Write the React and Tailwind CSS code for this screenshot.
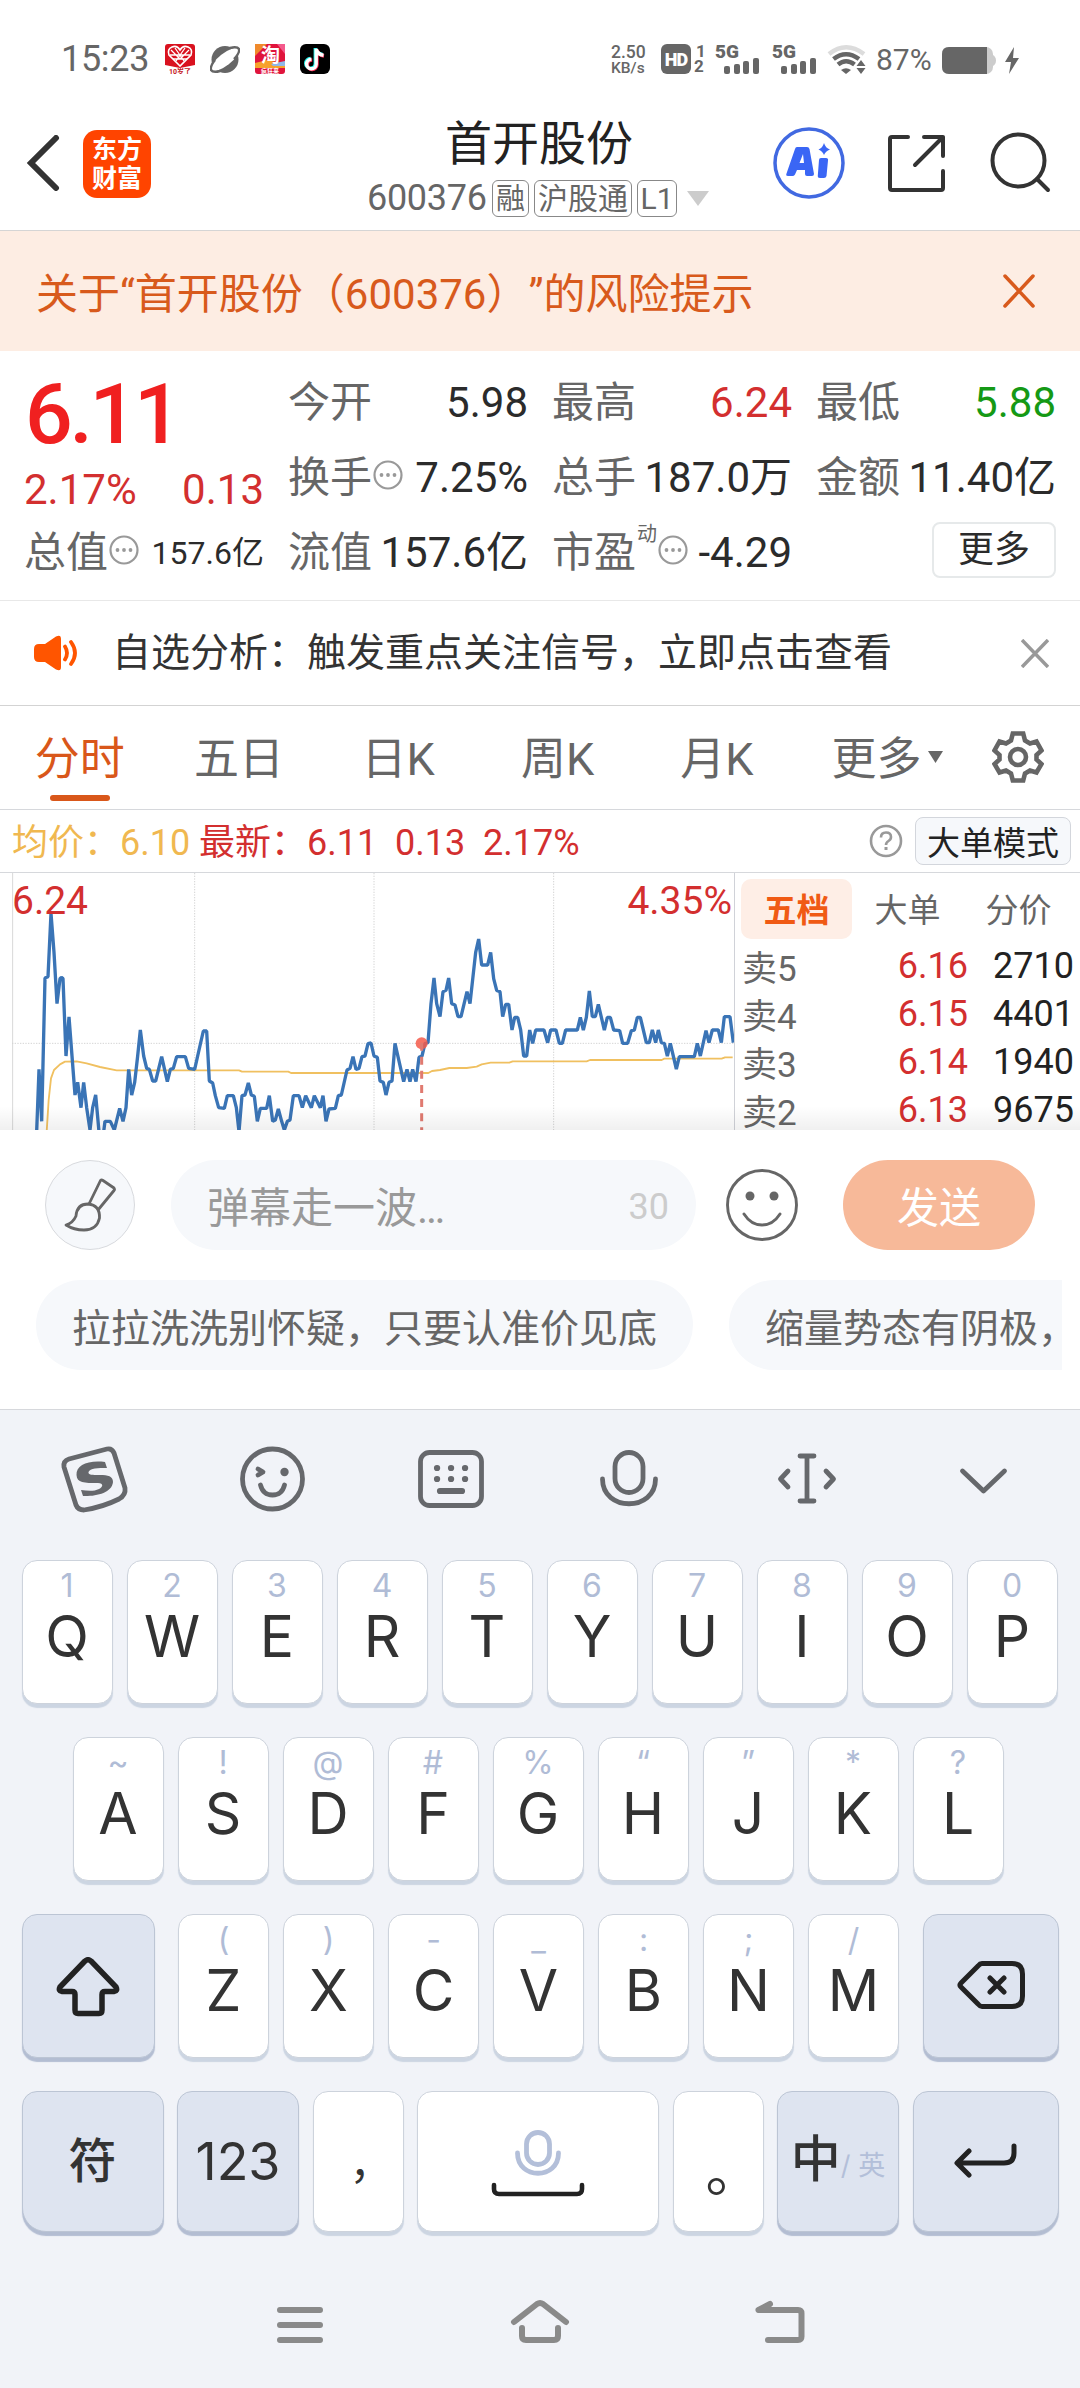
import { useState } from "react";

const priceLine =
  "110,1295 117,1108 125,1264 135,834 144,830 153,640 162,757 171,911 180,836 184,832 189,836 198,1068 207,951 216,1068 225,1185 233,1147 243,1223 251,1147 260,1223 270,1290 278,1223 287,1185 297,1295 311,1295 315,1264 331,1264 343,1290 359,1225 369,1264 378,1223 386,1108 395,1185 404,1147 413,1068 421,990 431,1068 440,1105 448,1108 458,1143 467,1143 485,1070 502,1145 511,1108 520,1105 530,1070 556,1070 566,1105 584,1108 593,1068 610,993 620,993 628,1143 638,1149 646,1187 656,1223 673,1225 682,1187 700,1187 709,1223 717,1295 726,1187 735,1185 745,1149 754,1185 763,1189 772,1264 781,1225 800,1225 808,1187 818,1264 826,1260 835,1227 845,1264 853,1290 862,1264 870,1260 880,1187 897,1187 907,1223 917,1187 934,1223 943,1187 961,1223 969,1187 978,1264 987,1227 1006,1225 1015,1187 1024,1185 1041,1110 1050,1105 1059,1070 1068,1108 1077,1105 1086,1070 1095,1068 1104,1031 1113,1029 1122,1068 1132,1072 1140,1143 1150,1147 1158,1185 1167,1147 1176,1143 1185,1030 1211,1145 1221,1108 1230,1145 1238,1108 1248,1145 1257,1072 1266,1068 1275,1030 1284,1028 1293,911 1302,834 1310,911 1320,950 1329,875 1338,871 1346,834 1355,911 1365,915 1374,950 1383,950 1401,875 1410,911 1427,757 1436,717 1445,795 1463,795 1472,757 1481,836 1490,871 1500,875 1508,950 1517,913 1526,913 1536,990 1544,952 1553,952 1562,990 1571,1068 1580,1068 1589,990 1598,1030 1607,990 1632,990 1643,1028 1652,990 1668,990 1678,1030 1687,1030 1697,990 1732,990 1741,952 1750,990 1759,952 1768,873 1777,950 1786,950 1795,913 1813,990 1822,952 1831,952 1841,990 1859,992 1868,1030 1883,1030 1894,992 1903,990 1912,952 1921,952 1930,990 1939,1028 1948,1028 1957,990 1967,1028 1975,990 1984,1028 1993,1030 2002,1068 2011,1030 2029,1107 2038,1070 2083,1070 2092,1030 2101,1068 2118,992 2127,1028 2137,990 2155,990 2164,1028 2173,950 2190,950 2200,1028";

const avgLine =
  "140,1295 146,1200 153,1135 162,1110 180,1093 195,1085 230,1084 260,1090 300,1101 350,1111 717,1111 726,1115 865,1115 873,1119 1285,1119 1296,1113 1320,1110 1348,1104 1400,1104 1430,1100 1445,1093 1472,1088 1528,1088 1538,1084 1760,1084 1770,1080 1985,1080 1993,1076 2165,1076 2175,1072 2198,1072";

const tabs = ["分时", "五日", "日K", "周K", "月K"];

const asks = [
  { name: "卖5", price: "6.16", volume: "2710" },
  { name: "卖4", price: "6.15", volume: "4401" },
  { name: "卖3", price: "6.14", volume: "1940" },
  { name: "卖2", price: "6.13", volume: "9675" },
];

const row1 = [["Q", "1"], ["W", "2"], ["E", "3"], ["R", "4"], ["T", "5"], ["Y", "6"], ["U", "7"], ["I", "8"], ["O", "9"], ["P", "0"]];
const row2 = [["A", "~"], ["S", "!"], ["D", "@"], ["F", "#"], ["G", "%"], ["H", "“"], ["J", "”"], ["K", "*"], ["L", "?"]];
const row3 = [["Z", "("], ["X", ")"], ["C", "-"], ["V", "_"], ["B", ":"], ["N", ";"], ["M", "/"]];

const Signal = () => (
  <div className="w-[45px] h-[30px] flex flex-col justify-between">
    <span className="text-[19px] leading-[15px] h-[14px] font-black">5G</span>
    <svg className="ml-[9px] -mt-[2px]" width="36" height="16" fill="#666">
      <rect x="0" y="8" width="6" height="8" rx="2" />
      <rect x="10" y="6" width="6" height="10" rx="2" />
      <rect x="19" y="3" width="6" height="13" rx="2" />
      <rect x="29" y="0" width="6" height="16" rx="2" />
    </svg>
  </div>
);

const StatusBar = () => (
  <div className="h-[118px] pt-[44px] pl-[61px] flex items-start text-[#666]">
    <span className="w-[104px] text-[36px] leading-[30px] tracking-[-0.3px]">15:23</span>
    <div className="flex gap-[15px]">
      <svg width="30" height="30" viewBox="0 0 30 30">
        <rect width="30" height="30" rx="3" fill="#fff" />
        <path d="M3 0H27Q30 0 30 3V21L15 24L0 21V3Q0 0 3 0Z" fill="#d9121f" />
        <path d="M15 22L4 11Q2 5 7 3Q12 1 15 6Q18 1 23 3Q28 5 26 11Z" fill="none" stroke="#fff" strokeWidth="1.6" />
        <path d="M6 6L15 15M10 4L19 17M24 6L15 15M20 4L11 17M5 11H25M8 15H22" stroke="#fff" strokeWidth="1.3" />
        <text x="15" y="29.5" fontSize="7" fontWeight="bold" textAnchor="middle" fill="#c4161c">10岁了</text>
      </svg>
      <svg width="30" height="30" viewBox="0 0 30 30">
        <circle cx="15" cy="15.5" r="13.5" fill="#666" />
        <ellipse cx="15" cy="15.5" rx="17" ry="6" transform="rotate(-38 15 15.5)" fill="#fff" />
        <path d="M20 4Q27 2 29 5Q30 9 24 15M10 27Q3 29 1 26Q0 22 5 16" fill="none" stroke="#666" strokeWidth="2.4" />
      </svg>
      <svg width="30" height="30" viewBox="0 0 30 30">
        <rect width="30" height="30" rx="3" fill="#e0143c" />
        <path d="M0 0H12L0 12Z" fill="#f08a2c" />
        <path d="M22 0H30V10Z" fill="#f45a8c" />
        <path d="M0 19L12 16L30 20V24H0Z" fill="#f7a12b" />
        <path d="M16 20L30 17V22H18Z" fill="#8fb8e8" />
        <text x="15.5" y="18" fontSize="19" fontWeight="bold" textAnchor="middle" fill="#fff">淘</text>
        <text x="15" y="28.5" fontSize="6" fontWeight="bold" textAnchor="middle" fill="#fff">疯狂来</text>
      </svg>
      <svg width="30" height="30" viewBox="0 0 30 30">
        <rect width="30" height="30" rx="6" fill="#000" />
        <g fill="none" strokeWidth="3.4">
          <path d="M15.3 4V19.5A4.8 4.8 0 1 1 10.5 14.5M15.3 4.5Q16.5 9.5 22.5 10.5" stroke="#25f4ee" />
          <path d="M17 5.5V21A4.8 4.8 0 1 1 12.2 16M17 6Q18.2 11 24 12" stroke="#fe2c55" />
          <path d="M16.2 4.7V20.2A4.8 4.8 0 1 1 11.4 15.2M16.2 5Q17.4 10.3 23.5 11.3" stroke="#fff" />
        </g>
      </svg>
    </div>
    <div className="ml-[281px] w-[50px] flex flex-col text-[17.5px] leading-[16px] font-medium">
      <span>2.50</span>
      <span className="text-[15.5px] leading-[17px]">KB/s</span>
    </div>
    <div className="w-[30px] h-[30px] rounded-[6px] bg-[#666] text-white text-[18px] leading-[31px] text-center font-black tracking-[-1px]">HD</div>
    <div className="w-[24px] pl-[3px] flex flex-col text-[17px] leading-[15px] font-bold">
      <span className="pl-[2px]">1</span>
      <span>2</span>
    </div>
    <Signal />
    <div className="w-[12px]" />
    <Signal />
    <svg className="ml-[10px]" width="40" height="30" viewBox="0 0 40 30" fill="none" strokeWidth="4.5">
      <path d="M2 10Q19 -3.5 37 10" stroke="#dcdcdc" />
      <path d="M6.5 15Q19 5.5 32 15" stroke="#666" />
      <path d="M11 20.5Q19 14 27.5 20.5" stroke="#666" />
      <path d="M14 26Q19 22.5 24 26L19 30Z" fill="#666" />
      <path d="M34 16L38.5 22H29.5ZM34 30L38.5 24H29.5Z" fill="#666" />
    </svg>
    <span className="ml-[9px] w-[66px] text-[30px] leading-[31px]">87%</span>
    <svg className="mt-[3px]" width="78" height="28" viewBox="0 0 78 28">
      <rect x="0" y="0" width="51" height="27" rx="7" fill="#ccc" />
      <path d="M51 8Q54 10 54 13.5Q54 17 51 19Z" fill="#ccc" />
      <path d="M7 0H45V27H7Q0 27 0 20V7Q0 0 7 0Z" fill="#666" />
      <path d="M72 0L63 15H69L67 27L77 11H71Z" fill="#666" />
    </svg>
  </div>
);

const Header = () => (
  <div className="h-[113px] border-b border-[#d5d5d5] flex items-start">
    <div className="w-[367px] flex pl-[26px] pt-[12px]">
      <svg className="mt-[5px]" width="34" height="56" viewBox="0 0 34 56" fill="none" stroke="#333" strokeWidth="6">
        <path d="M30 3L5 28L30 53" strokeLinecap="round" />
      </svg>
      <div className="ml-[23px] w-[68px] h-[68px] rounded-[14px] bg-[#ff4400] text-white text-[25px] leading-[29px] font-bold flex flex-col items-center justify-center">
        <span>东方</span>
        <span>财富</span>
      </div>
    </div>
    <div className="w-[345px] flex flex-col">
      <div className="h-[60px] pl-[78px] text-[47px] leading-[52px] text-[#222]">首开股份</div>
      <div className="flex items-center h-[40px] text-[#666]">
        <span className="w-[125px] text-[36px] leading-[40px] tracking-[-0.3px]">600376</span>
        <span className="w-[37px] h-[37px] border border-[#888] rounded-[6px] text-[29px] leading-[36px] text-center">融</span>
        <span className="ml-[5px] w-[98px] h-[37px] border border-[#888] rounded-[6px] text-[30px] leading-[36px] text-center">沪股通</span>
        <span className="ml-[5px] w-[40px] h-[37px] border border-[#888] rounded-[6px] text-[30px] leading-[36px] text-center">L1</span>
        <svg className="ml-[10px]" width="22" height="15">
          <path d="M0 0H22L11 15Z" fill="#ccc" />
        </svg>
      </div>
    </div>
    <svg className="ml-[61px] mt-[9px]" width="72" height="72" viewBox="0 0 72 72">
      <circle cx="36" cy="36" r="34" fill="none" stroke="#4169e1" strokeWidth="3.5" />
      <path fillRule="evenodd" d="M24 20H34Q36 20 36.5 22L41 47Q41 49 39 49H34Q32 49 32 47V43H24L22 47.5Q21 49 19.5 49H15Q12.5 49 13.5 46.5L22 22Q22.5 20 24 20ZM26.5 36H31L30 27Z" fill="#3a66f5" />
      <path d="M48 31H53Q55.500 31 55 33.5L53.500 49Q53 51 51 51H47Q44.500 51 44.800 48.500L46 33Q46 31 48 31Z" fill="#3a66f5" />
      <path d="M51 16Q52.5 21 57 22.5Q52.5 24 51 28Q49.5 24 45.5 22.5Q49.5 21 51 16Z" fill="#3a66f5" />
    </svg>
    <svg className="ml-[42px] mt-[16px]" width="60" height="60" viewBox="0 0 60 60" fill="none" stroke="#333" strokeWidth="4" strokeLinecap="round" strokeLinejoin="round">
      <path d="M21 3H5Q3 3 3 5V54Q3 56 5 56H54Q56 56 56 54V37M37 3H56V22M56 3L28 31" />
    </svg>
    <svg className="ml-[43px] mt-[14px]" width="62" height="62" viewBox="0 0 62 62" fill="none" stroke="#333" strokeWidth="4" strokeLinecap="round">
      <circle cx="28.5" cy="28.5" r="26" />
      <path d="M47 47L58 58" />
    </svg>
  </div>
);

const RiskBanner = () => (
  <div className="h-[120px] bg-[#fdede3] flex items-center justify-between pl-[36px] pr-[45px] text-[#d85a1c]">
    <span className="text-[42px] leading-none pt-[8px] [text-spacing-trim:space-all]">关于“首开股份（600376）”的风险提示</span>
    <svg width="32" height="34" stroke="#d85a1c" strokeWidth="3.5" strokeLinecap="round">
      <path d="M2 2L30 32M30 2L2 32" />
    </svg>
  </div>
);

const Dots = () => (
  <svg className="ml-[1px] mb-[6px] shrink-0" width="30" height="30" viewBox="0 0 30 30">
    <circle cx="15" cy="15" r="13.5" fill="none" stroke="#999" strokeWidth="2.2" />
    <circle cx="8.5" cy="15" r="1.9" fill="#999" />
    <circle cx="15" cy="15" r="1.9" fill="#999" />
    <circle cx="21.5" cy="15" r="1.9" fill="#999" />
  </svg>
);

const Stat = ({ label, sup, value, dots, color = "text-[#2b2b2b]" }) => (
  <div className="flex items-center justify-between h-[75px] leading-none">
    <div className="flex items-center text-[#666]">
      <span>{label}</span>
      {sup && <span className="text-[20px] ml-[1px] mb-[38px]">{sup}</span>}
      {dots && <Dots />}
    </div>
    <span className={color}>{value}</span>
  </div>
);

const Quote = () => (
  <div className="h-[250px] border-b border-[#e8e8e8] pt-[14px] px-[24px] grid grid-cols-4 gap-x-[24px] text-[42px] text-[#2b2b2b]">
    <div className="flex flex-col">
      <div className="h-[91px] pl-[1px] text-[84px] leading-[99px] font-medium tracking-[-3.3px] text-[#f02020]">6.11</div>
      <div className="h-[59px] flex justify-between leading-[68px] text-[#d32f2f]">
        <span>2.17%</span>
        <span>0.13</span>
      </div>
      <div className="h-[75px] flex items-center justify-between leading-none">
        <div className="flex items-center text-[#666]">
          <span>总值</span>
          <Dots />
        </div>
        <span className="text-[32px]">157.6亿</span>
      </div>
    </div>
    <div>
      <Stat label="今开" value="5.98" />
      <Stat label="换手" value="7.25%" dots />
      <Stat label="流值" value="157.6亿" />
    </div>
    <div>
      <Stat label="最高" value="6.24" color="text-[#d32f2f]" />
      <Stat label="总手" value="187.0万" />
      <Stat label="市盈" sup="动" value="-4.29" dots />
    </div>
    <div>
      <Stat label="最低" value="5.88" color="text-[#159915]" />
      <Stat label="金额" value="11.40亿" />
      <div className="flex justify-end pt-[7px]">
        <button className="w-[124px] h-[56px] border-2 border-[#e6e9ea] rounded-[8px] text-[36px] leading-[52px]">更多</button>
      </div>
    </div>
  </div>
);

const Notice = () => (
  <div className="h-[105px] border-b border-[#d3d3d3] flex items-center pl-[34px] pr-[31px]">
    <svg width="44" height="36" viewBox="0 0 44 36">
      <path d="M5 9H11L22 1.5Q27 -1 27 4V32Q27 37 22 34.5L11 27H5Q0 27 0 22V14Q0 9 5 9Z" fill="#ff5500" />
      <path d="M31 11.5Q35 18 31 24.5M37 7Q45 18 37 29" fill="none" stroke="#ff5500" strokeWidth="3.8" strokeLinecap="round" />
    </svg>
    <span className="ml-[34px] text-[39px] leading-none text-[#333]">自选分析：触发重点关注信号，立即点击查看</span>
    <svg className="ml-auto" width="28" height="29" stroke="#999" strokeWidth="3.5">
      <path d="M1 1L27 28M27 1L1 28" />
    </svg>
  </div>
);

const Tabs = ({ active, onChange }) => (
  <div className="h-[104px] border-b border-[#d6d8dc] flex text-[45px] leading-[107px] text-[#666]">
    {tabs.map((t) => (
      <button
        key={t}
        onClick={() => onChange(t)}
        className={t === active ? "w-[159.3px] h-[102px] flex flex-col items-center text-[#d9571a]" : "w-[159.3px] h-[102px] flex flex-col items-center"}
      >
        <span className="h-[89px]">{t}</span>
        {t === active && <span className="w-[60px] h-[6px] rounded-full bg-[#d9571a]" />}
      </button>
    ))}
    <div className="flex pl-[35px] w-[196px]">
      <span>更多</span>
      <svg className="ml-[6px] mt-[45px]" width="16" height="13">
        <path d="M0 0H15L7.5 12Z" fill="#666" />
      </svg>
    </div>
    <svg className="mt-[25px]" width="52" height="52" viewBox="0 0 52 52" fill="none" stroke="#666" strokeWidth="4.6">
      <path d="M20.8 2.5H31.2L33 9.5L38 12.5L44.5 10.5L49.5 19.5L44.5 24V28.5L49.5 33L44.5 41.5L38 39.5L33 42.5L31.2 49.5H20.8L19 42.5L14 39.5L7.5 41.5L2.5 33L7.5 28.5V24L2.5 19.5L7.5 10.5L14 12.5L19 9.5Z" />
      <circle cx="26" cy="26" r="8" />
    </svg>
  </div>
);

const PriceInfo = () => (
  <div className="h-[63px] border-b border-[#d6d8dc] flex items-center pl-[12px] pr-[9px] text-[36px] leading-[44px] text-[#d32f2f]">
    <span className="text-[#f0b850] w-[187px] pt-[3px]">均价：6.10</span>
    <span className="w-[196px] pt-[3px]">最新：6.11</span>
    <span className="w-[88px] pt-[3px]">0.13</span>
    <span className="pt-[3px]">2.17%</span>
    <svg className="ml-auto" width="34" height="34" viewBox="0 0 34 34" fill="none" stroke="#999" strokeWidth="2.6">
      <circle cx="17" cy="17" r="15" />
      <path d="M12 13.5Q12 8.5 17 8.5Q22 8.5 22 13Q22 15.5 19.5 17Q17 18.5 17 21" />
      <path d="M17 23V26" strokeWidth="3" />
    </svg>
    <span className="ml-[12px] w-[156px] h-[48px] rounded-[8px] border border-[#d3d6dc] bg-[#f6f8fb] text-[#222] text-[33px] leading-[51px] text-center">大单模式</span>
  </div>
);

const Chart = () => (
  <div className="relative w-[735px] h-[257px] border-r border-[#d0d2d8] pl-[12px]">
    <svg width="722" height="257" viewBox="36 519 2166 771" fill="none">
      <path d="M37 519V1290" stroke="#ddd" strokeWidth="5" />
      <path d="M584 519V1290M1122 519V1290M1661 519V1290M36 1030H2202" stroke="#d4d4d4" strokeWidth="3" strokeDasharray="4 4" />
      <polyline points={avgLine} stroke="#f0c060" strokeWidth="5.5" strokeLinejoin="round" />
      <polyline points={priceLine} stroke="#3a74b6" strokeWidth="10" strokeLinejoin="bevel" />
      <circle cx="1265" cy="1030" r="18" fill="#f55a4a" fillOpacity="0.85" />
      <path d="M1265 1028V1290" stroke="#e07a70" strokeWidth="9" strokeDasharray="24 18.3" />
    </svg>
    <div className="absolute top-[9px] left-[12px] right-[2px] flex justify-between text-[39px] leading-[38px] text-[#d32f2f]">
      <span>6.24</span>
      <span>4.35%</span>
    </div>
  </div>
);

const OrderBook = () => (
  <div className="flex-1 pt-[6px]">
    <div className="ml-[6px] w-[333px] grid grid-cols-3 text-center text-[33px] leading-[64px] text-[#666]">
      <span className="h-[60px] rounded-[10px] bg-[#feeee6] text-[#f05a14] font-bold">五档</span>
      <span>大单</span>
      <span>分价</span>
    </div>
    <div className="-mt-[1px]">
      {asks.map((a) => (
        <div key={a.name} className="h-[48px] flex pl-[7px] pr-[6px] text-[36px] leading-[48px]">
          <span className="pt-[9px] text-[#666] text-[35px] leading-[38px]">{a.name}</span>
          <span className="ml-auto text-[#d32f2f]">{a.price}</span>
          <span className="w-[106px] text-right text-[#222]">{a.volume}</span>
        </div>
      ))}
    </div>
  </div>
);

const MessageBar = () => (
  <div className="h-[279px] bg-white pt-[30px]">
    <div className="flex items-center h-[90px] pl-[45px]">
      <div className="w-[90px] h-[90px] rounded-full border border-[#d8dade] bg-[#f6f8fb] flex items-center justify-center">
        <svg width="52" height="54" viewBox="0 0 52 54" fill="none" stroke="#666" strokeWidth="2.8" strokeLinejoin="round">
          <path d="M25 26L36.5 2.5Q37.5 1.5 39 2.5L50 10Q51 11.5 50 12.5L34 32" />
          <path d="M2 47Q9 45 12 38Q13 26 24 26Q36 27 35.5 40Q33 52 20 52Q10 52 2 47Z" />
        </svg>
      </div>
      <div className="ml-[36px] w-[525px] h-[90px] rounded-full bg-[#f6f8fb] flex items-center justify-between pl-[36px] pr-[27px] leading-none">
        <span className="text-[42px] text-[#999] pt-[8px]">弹幕走一波…</span>
        <span className="text-[36px] text-[#ccc] pt-[3px]">30</span>
      </div>
      <svg className="ml-[30px]" width="72" height="72" viewBox="0 0 72 72" fill="none" stroke="#666" strokeWidth="2.9">
        <circle cx="36" cy="36" r="34.5" />
        <circle cx="24" cy="27" r="4.5" fill="#666" stroke="none" />
        <circle cx="48" cy="27" r="4.5" fill="#666" stroke="none" />
        <path d="M18 45Q25 56 36 56Q47 56 54 45" strokeLinecap="round" />
      </svg>
      <button className="ml-[45px] w-[192px] h-[90px] rounded-full bg-[#f7b999] text-white text-[42px] leading-none pt-[8px]">发送</button>
    </div>
    <div className="mt-[30px] ml-[36px] w-[1026px] flex gap-[36px] overflow-hidden text-[39px] leading-[98px] text-[#666] whitespace-nowrap">
      <span className="h-[90px] px-[36px] rounded-full bg-[#f6f8fb] shrink-0">拉拉洗洗别怀疑，只要认准价见底</span>
      <span className="h-[90px] pl-[36px] rounded-l-full bg-[#f6f8fb] shrink-0">缩量势态有阴极，</span>
    </div>
  </div>
);

const Toolbar = () => (
  <svg className="block" width="1080" height="150" viewBox="0 1410 1080 150" fill="none" stroke="#66686c" strokeWidth="4.8" strokeLinecap="round" strokeLinejoin="round">
    <path d="M69 1459L107 1449Q112 1448 114 1453L125 1488Q126 1495 119 1499Q103 1507 84 1510Q78 1510 76 1505L64 1467Q63 1461 69 1459Z" />
    <path fill="#66686c" stroke="none" d="M105 1462C88 1460 76 1465 76.5 1475C77 1483 84 1483 98 1483C104 1483.5 103 1487 99 1489C94 1491.5 88 1491 81 1490L83 1496C96 1496.5 112 1493 113 1482C113 1476 108 1475 100 1475C92 1475 88 1475 88.5 1472C90 1468 98 1468 107 1468Z" />
    <circle cx="272.5" cy="1479" r="30" />
    <path d="M258 1469L263 1472L258 1475" />
    <circle cx="284.5" cy="1472" r="4.2" fill="#66686c" stroke="none" />
    <path d="M260.5 1485Q263 1495 272.5 1495Q282 1495 284.5 1485" />
    <rect x="420.5" y="1452.5" width="61" height="53" rx="9" />
    <path d="M437 1468H437.1M451 1468H451.1M465 1468H465.1M437 1479H437.1M451 1479H451.1M465 1479H465.1M440 1491H462" strokeWidth="6.2" />
    <rect x="615" y="1452.5" width="28" height="40" rx="14" />
    <path d="M602.5 1479C602.5 1512 655.5 1512 655.5 1479" />
    <path d="M800 1456H814M800 1501H814M807 1456V1501M788 1471L780.5 1479L788 1487M826 1471L833.5 1479L826 1487" />
    <path d="M962.5 1471L983.5 1491L1004.5 1471" />
  </svg>
);

const Key = ({ letter, hint }) => (
  <div className="w-[91px] h-[144px] rounded-[15px] border border-[#cdd3dc] bg-white shadow-[0_4px_1px_#ccd5e2] flex flex-col items-center leading-none">
    <span className="h-[47px] pt-[9px] text-[32px] text-[#b0bcd6]">{hint}</span>
    <span className="text-[57px] text-[#333]">{letter}</span>
  </div>
);

const Keyboard = () => (
  <div className="flex-1 bg-[#f1f3f8] border-t border-[#d6d8dc] font-['Inter','Noto_Sans_CJK_SC',sans-serif]">
    <Toolbar />
    <div className="flex flex-col gap-[33px] px-[21.5px]">
      <div className="flex gap-[14px]">
        {row1.map(([letter, hint]) => <Key key={letter} letter={letter} hint={hint} />)}
      </div>
      <div className="flex gap-[14px] pl-[51px]">
        {row2.map(([letter, hint]) => <Key key={letter} letter={letter} hint={hint} />)}
      </div>
      <div className="flex justify-between">
        <div className="w-[133px] h-[144px] rounded-[15px] border border-[#bcc5d4] bg-[#dee4f0] shadow-[0_4px_1px_#b3bdd2] flex items-center justify-center">
          <svg className="mt-[2px]" width="64" height="60" viewBox="0 0 64 60" fill="none" stroke="#222" strokeWidth="5.5" strokeLinejoin="round">
            <path d="M29 4Q32 1.5 35 4L60 30Q62 34 58 34.5H49Q46 34.5 46 37.5V53Q46 56.5 43 56.5H22Q19 56.5 19 53V37.5Q19 34.5 16 34.5H6Q2 34 4 30Z" />
          </svg>
        </div>
        <div className="flex gap-[14px]">
          {row3.map(([letter, hint]) => <Key key={letter} letter={letter} hint={hint} />)}
        </div>
        <div className="w-[136px] h-[144px] rounded-[15px] border border-[#bcc5d4] bg-[#dee4f0] shadow-[0_4px_1px_#b3bdd2] flex items-center justify-center">
          <svg className="-mt-[2px]" width="68" height="48" viewBox="0 0 68 48" fill="none" stroke="#222" strokeWidth="5" strokeLinecap="round" strokeLinejoin="round">
            <path d="M25 2.5H55Q65.5 2.5 65.5 13V35Q65.5 45.5 55 45.5H25Q23 45.5 21 43L4 26Q2 24 4 22L21 5Q23 2.5 25 2.5ZM33 17L47 31M47 17L33 31" />
          </svg>
        </div>
      </div>
      <div className="flex justify-between text-[#333]">
        <div className="w-[142px] h-[141px] rounded-[15px] rounded-bl-[24px] border border-[#bcc5d4] bg-[#dee4f0] shadow-[0_4px_1px_#b3bdd2] text-center text-[48px] leading-[138px] font-medium">符</div>
        <div className="w-[122px] h-[141px] rounded-[15px] border border-[#bcc5d4] bg-[#dee4f0] shadow-[0_4px_1px_#b3bdd2] text-center text-[52px] leading-[140px]">123</div>
        <div className="w-[91px] h-[141px] rounded-[15px] border border-[#cdd3dc] bg-white shadow-[0_4px_1px_#ccd5e2] pl-[36px] text-[43px] leading-[142px]">，</div>
        <div className="w-[242px] h-[141px] rounded-[15px] border border-[#cdd3dc] bg-white shadow-[0_4px_1px_#ccd5e2] flex justify-center pt-[38px]">
          <svg width="94" height="68" viewBox="0 0 94 68" fill="none" strokeLinecap="round">
            <rect x="35.5" y="2.5" width="23" height="32" rx="11.5" stroke="#b3bfd9" strokeWidth="4.8" />
            <path d="M26.5 23C26.5 50 67.5 50 67.5 23" stroke="#b3bfd9" strokeWidth="4.8" />
            <path d="M3 55V59Q3 64 8 64H86Q91 64 91 59V55" stroke="#222" strokeWidth="4.6" />
          </svg>
        </div>
        <div className="w-[91px] h-[141px] rounded-[15px] border border-[#cdd3dc] bg-white shadow-[0_4px_1px_#ccd5e2] pl-[32px] pt-[10px] text-[56px] leading-[139px]">
          <span className="block h-[120px]">。</span>
        </div>
        <div className="w-[122px] h-[141px] rounded-[15px] border border-[#bcc5d4] bg-[#dee4f0] shadow-[0_4px_1px_#b3bdd2] flex justify-center leading-[134px]">
          <span className="text-[50px] font-medium">中</span>
          <span className="text-[27px] leading-[148px] text-[#b3bfd9]">/ 英</span>
        </div>
        <div className="w-[146px] h-[141px] rounded-[15px] rounded-br-[24px] border border-[#bcc5d4] bg-[#dee4f0] shadow-[0_4px_1px_#b3bdd2] flex items-start justify-center pt-[51px]">
          <svg width="64" height="36" viewBox="0 0 64 36" fill="none" stroke="#222" strokeWidth="5" strokeLinecap="round" strokeLinejoin="round">
            <path d="M60 3V10Q60 20 50 20H4M15 8L3 20L15 32" />
          </svg>
        </div>
      </div>
    </div>
    <div className="flex pt-[66px] pl-[276px]">
      <svg width="530" height="46" viewBox="276 2298 530 46" fill="none" stroke="#8a8a8a" strokeWidth="6" strokeLinecap="round" strokeLinejoin="round">
        <path d="M280 2310H320M280 2325H320M280 2340H320" />
        <path d="M514 2322L537 2304Q540 2302 543 2304L566 2322M522 2328V2336Q522 2340 526 2340H554Q558 2340 558 2336V2328" />
        <path d="M770 2304L758.5 2310H798Q801.5 2310 801.5 2313.5V2336.5Q801.5 2340 798 2340H768" />
      </svg>
    </div>
  </div>
);

const App = () => {
  const [tab, setTab] = useState("分时");

  return (
    <div className="w-[1080px] h-[2388px] overflow-hidden bg-white flex flex-col font-['Roboto','Noto_Sans_CJK_SC',sans-serif]">
      <StatusBar />
      <Header />
      <RiskBanner />
      <Quote />
      <Notice />
      <Tabs active={tab} onChange={setTab} />
      <PriceInfo />
      <div className="relative flex h-[257px] overflow-hidden">
        <Chart />
        <OrderBook />
        <div className="absolute inset-x-0 bottom-0 h-[24px] bg-linear-to-b from-transparent to-black/6" />
      </div>
      <MessageBar />
      <Keyboard />
    </div>
  );
};

export default App;
